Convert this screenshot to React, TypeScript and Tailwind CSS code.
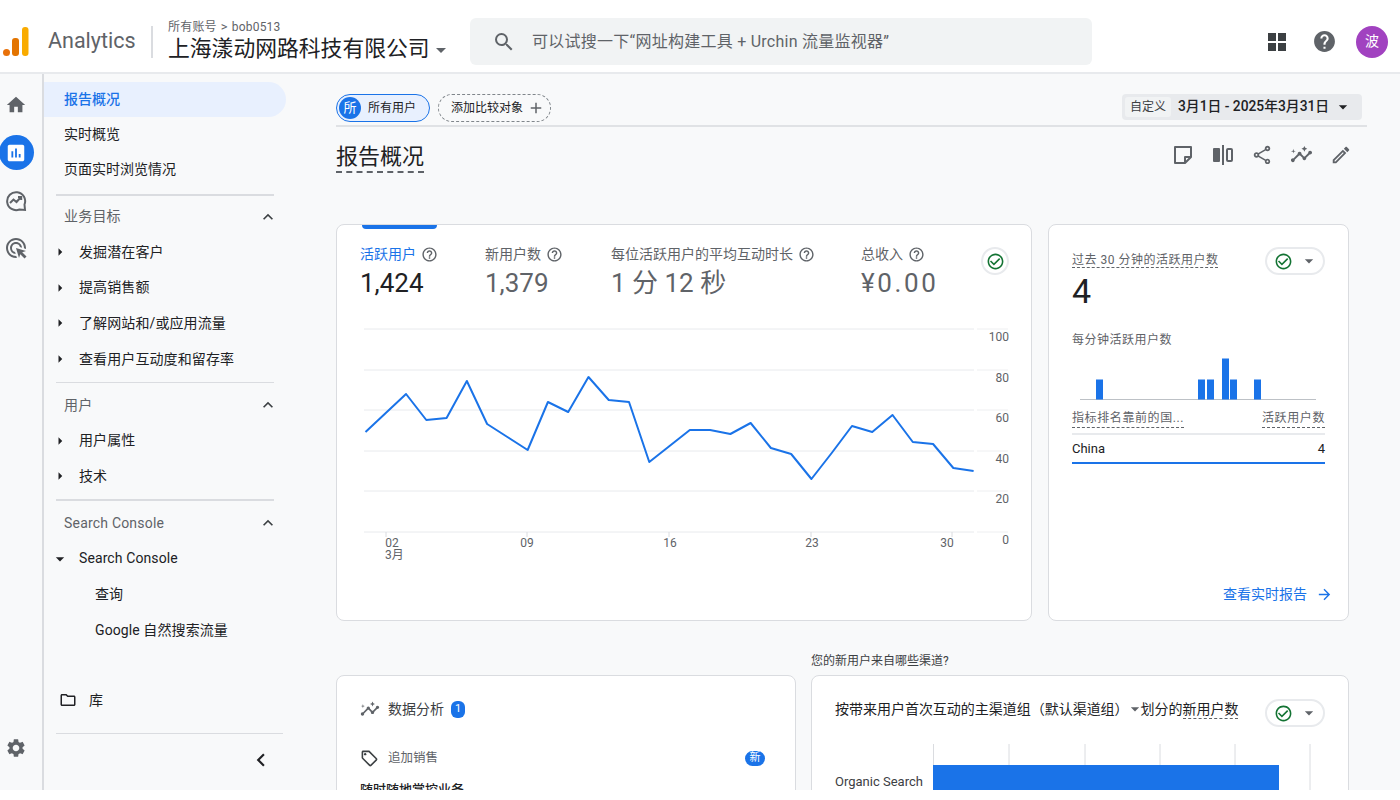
import type { ReactNode } from 'react';
import {
  MdAdd, MdAdsClick, MdArrowDropDown, MdArrowForward, MdArrowRight, MdAssessment, MdCheckCircleOutline,
  MdChevronLeft, MdHelp, MdHelpOutline, MdHome, MdInsights, MdKeyboardArrowUp, MdOutlineEdit,
  MdOutlineFolder, MdOutlineLocalOffer, MdOutlineShare, MdSearch, MdSettings,
} from 'react-icons/md';

const LINE_Y = [432, 413, 394, 420, 418, 381, 424, 437, 450, 402, 412, 377, 400, 402, 462, 446, 430, 430, 434, 423, 448, 454, 479, 453, 426, 432, 415, 442, 444, 468, 471];
const GRID_Y = [329, 370, 410, 451, 491, 532];
const AXIS_LABELS = ['100', '80', '60', '40', '20', '0'];
const X_LABELS = [['02', 392], ['09', 527], ['16', 670], ['23', 812], ['30', 947]] as const;
const MINUTE_BARS = [[1096, 20], [1198, 20], [1207, 20], [1222, 41], [1230, 20], [1254, 20]];

function Logo() {
  return (
    <svg width="26" height="30" viewBox="0 0 26 30" className="shrink-0">
      <circle cx="3.5" cy="25.5" r="3.5" fill="#e8710a" />
      <rect x="9" y="11" width="7" height="18" rx="3" fill="#e37400" />
      <rect x="19" y="0" width="6.5" height="29" rx="3" fill="#f9ab00" />
    </svg>
  );
}

function ExploreIcon() {
  return (
    <svg width="22" height="22" viewBox="0 0 22 22" fill="none" stroke="#5f6368" strokeWidth="2">
      <path d="M19.5 14.5A9 9 0 1 0 14.5 19.5l5.5.5z" />
      <path d="M5 13l3.5-3.5 3 2.5 4.5-5M13 7h3.2v3" />
    </svg>
  );
}

function NoteIcon() {
  return (
    <svg width="20" height="20" viewBox="0 0 20 20" fill="none" stroke="#5f6368" strokeWidth="2" strokeLinejoin="round">
      <path d="M2 2h16v10l-6 6H2z" />
      <path d="M18 12h-6v6" />
    </svg>
  );
}

function CompareIcon() {
  return (
    <svg width="22" height="20" viewBox="0 0 22 20">
      <rect x="1" y="3" width="7" height="14" rx="1" fill="#5f6368" />
      <rect x="10" y="0" width="2" height="20" fill="#5f6368" />
      <rect x="15" y="4" width="5" height="12" rx="1" fill="none" stroke="#5f6368" strokeWidth="2" />
    </svg>
  );
}

function NavItem({ children, active }: { children: ReactNode; active?: boolean }) {
  return (
    <div className={`flex h-[35px] w-[242px] items-center rounded-r-full pl-5 text-[14px] ${active ? 'bg-[#e8f0fe] font-medium text-[#1a73e8]' : 'text-[#202124]'}`}>
      {children}
    </div>
  );
}

function NavGroup({ label }: { label: string }) {
  return (
    <div className="flex h-[35.5px] w-[242px] items-center justify-between pl-5 pr-2 text-[14px] tracking-[0.2px] text-[#5f6368]">
      {label}
      <MdKeyboardArrowUp className="text-[20px] text-[#3c4043]" />
    </div>
  );
}

function NavChild({ label, open }: { label: string; open?: boolean }) {
  return (
    <div className="flex h-[35.6px] items-center pl-[6px] text-[14px] tracking-[0.1px] text-[#202124]">
      {open ? <MdArrowDropDown className="w-[20px] text-[20px]" /> : <MdArrowRight className="w-[20px] text-[18px]" />}
      <span className="ml-[9px]">{label}</span>
    </div>
  );
}

function Sidebar() {
  return (
    <aside className="flex w-[297px] shrink-0">
      <div className="w-[44px] shrink-0 border-r-2 border-[#dadce0]">
        <div className="flex h-full w-[32px] flex-col items-center pb-[31px] pt-[20px]">
          <MdHome className="shrink-0 text-[22px] text-[#5f6368]" />
          <div className="mt-[19px] flex h-[35px] w-[35px] shrink-0 items-center justify-center rounded-full bg-[#1a73e8]">
            <MdAssessment className="text-[22px] text-white" />
          </div>
          <div className="mt-[20px] shrink-0"><ExploreIcon /></div>
          <MdAdsClick className="mt-[24px] shrink-0 text-[24px] text-[#5f6368]" />
          <MdSettings className="mt-auto shrink-0 text-[22px] text-[#5f6368]" />
        </div>
      </div>
      <nav className="flex flex-1 flex-col pt-[8px]">
        <NavItem active>报告概况</NavItem>
        <NavItem>实时概览</NavItem>
        <NavItem>页面实时浏览情况</NavItem>
        <div className="ml-3 mb-[3.5px] mt-[7px] h-[1.5px] w-[218px] bg-[#dadce0]" />
        <NavGroup label="业务目标" />
        <NavChild label="发掘潜在客户" />
        <NavChild label="提高销售额" />
        <NavChild label="了解网站和/或应用流量" />
        <NavChild label="查看用户互动度和留存率" />
        <div className="ml-3 mb-[4px] mt-[5px] h-[1.5px] w-[218px] bg-[#dadce0]" />
        <NavGroup label="用户" />
        <NavChild label="用户属性" />
        <NavChild label="技术" />
        <div className="ml-3 my-[5px] h-[1.5px] w-[218px] bg-[#dadce0]" />
        <NavGroup label="Search Console" />
        <NavChild open label="Search Console" />
        <div className="flex h-[35.6px] items-center pl-[51px] text-[14px] text-[#202124]">查询</div>
        <div className="flex h-[35.6px] items-center pl-[51px] text-[14px] tracking-[0.1px] text-[#202124]">Google 自然搜索流量</div>
        <div className="mt-[35px] flex h-[35px] items-center pl-[15px] text-[14px] text-[#202124]">
          <MdOutlineFolder className="text-[18px]" />
          <span className="ml-[12px]">库</span>
        </div>
        <div className="ml-3 mt-[15px] h-[1.5px] w-[227px] bg-[#dadce0]" />
        <div className="flex h-[52px] items-center pl-[204px]">
          <MdChevronLeft className="text-[26px] text-[#202124]" />
        </div>
      </nav>
    </aside>
  );
}

function Metric({ label, value, width, active, wide }: { label: string; value: string; width: string; active?: boolean; wide?: boolean }) {
  return (
    <div className={`${width} shrink-0`}>
      <div className={`flex h-[20px] items-center gap-[5px] text-[14px] ${active ? 'text-[#1a73e8]' : 'text-[#5f6368]'}`}>
        {label}
        <MdHelpOutline className="text-[17px] text-[#5f6368]" />
      </div>
      <div className={`mt-[2px] h-[34px] text-[26px] leading-[34px] ${wide ? 'tracking-[2.6px]' : ''} ${active ? 'text-[#202124]' : 'text-[#5f6368]'}`}>{value}</div>
    </div>
  );
}

function StatusChip() {
  return (
    <div className="flex h-[28px] w-[60px] shrink-0 items-center rounded-full border-2 border-[#e8eaed] bg-white pl-[7px]">
      <MdCheckCircleOutline className="text-[19px] text-[#137333]" />
      <MdArrowDropDown className="ml-[6px] text-[20px] text-[#5f6368]" />
    </div>
  );
}

// svg coordinates are page pixels, the viewBox shifts them onto the card
function TrendChart() {
  const points = LINE_Y.map((y, i) => `${365.5 + i * 20.27},${y}`).join(' ');
  return (
    <svg width="694" height="250" viewBox="337 320 694 250" className="block" fontFamily="Roboto, 'Noto Sans CJK SC', sans-serif">
      {GRID_Y.map((y) => (
        <line key={y} x1="364" x2="974" y1={y} y2={y} stroke="#e8eaed" strokeWidth="1" />
      ))}
      {GRID_Y.map((y) => (
        <line key={y} x1="977" x2="1008" y1={y} y2={y} stroke="#eeeff1" strokeWidth="1" />
      ))}
      {AXIS_LABELS.map((label, i) => (
        <text key={label} x="1009" y={GRID_Y[i] + 12} textAnchor="end" fontSize="12" fill="#5f6368">{label}</text>
      ))}
      {[386, 527, 669, 811, 952].map((x) => (
        <line key={x} x1={x} x2={x} y1="532" y2="537" stroke="#dadce0" />
      ))}
      {X_LABELS.map(([label, x]) => (
        <text key={label} x={x} y="547" textAnchor="middle" fontSize="12" fill="#5f6368">{label}</text>
      ))}
      <text x="385" y="559" fontSize="12" fill="#5f6368">3月</text>
      <polyline points={points} fill="none" stroke="#1a73e8" strokeWidth="2" strokeLinejoin="round" />
    </svg>
  );
}

function MinuteBars() {
  return (
    <svg width="254" height="44" viewBox="1072 356 254 44" className="mt-[8px] block">
      <line x1="1080" x2="1316" y1="398.5" y2="398.5" stroke="#bdc1c6" />
      {MINUTE_BARS.map(([x, h]) => (
        <rect key={x} x={x} y={398.5 - h} width="7" height={h} fill="#1a73e8" />
      ))}
    </svg>
  );
}

function ChannelChart() {
  return (
    <svg width="485" height="50" viewBox="830 742 485 50" className="-ml-[5px] mt-[15px] block" fontFamily="Roboto, 'Noto Sans CJK SC', sans-serif">
      {[933.5, 1009, 1085, 1160, 1235, 1310].map((x) => (
        <line key={x} x1={x} x2={x} y1="744" y2="792" stroke="#dadce0" strokeWidth="1" />
      ))}
      <rect x="933" y="765" width="346" height="30" fill="#1a73e8" />
      <text x="835" y="786" fontSize="13" fill="#3c4043">Organic Search</text>
    </svg>
  );
}

export default function App() {
  return (
    <div className="h-[800px] w-[1400px] overflow-hidden bg-white font-['Roboto','Noto_Sans_CJK_SC',sans-serif]">
      <div className="flex h-[790px] flex-col overflow-hidden bg-[#f8f9fa]">
        <header className="flex h-[74px] shrink-0 items-center border-b-2 border-[#e8eaed] bg-white pt-[11px]">
          <div className="ml-[3px]"><Logo /></div>
          <div className="ml-[19px] w-[86px] text-[21.5px] text-[#5f6368]">Analytics</div>
          <div className="ml-[17px] h-[32px] w-[1.5px] bg-[#dadce0]" />
          <div className="ml-[15.5px] w-[302px] shrink-0">
            <div className="flex h-[16px] items-center gap-[4px] text-[12px] tracking-[0.2px] text-[#5f6368]">
              所有账号 <span className="text-[13px]">&gt;</span> bob0513
            </div>
            <div className="flex h-[29px] items-center text-[21.8px] text-[#202124]">
              上海漾动网路科技有限公司
              <MdArrowDropDown className="-ml-[1px] text-[24px] text-[#5f6368]" />
            </div>
          </div>
          <div className="flex h-[47px] w-[622px] items-center rounded-[6px] bg-[#f1f3f4] pl-[22px]">
            <MdSearch className="text-[24px] text-[#5f6368]" />
            <span className="ml-[16px] text-[16px] tracking-[0.25px] text-[#5f6368]">可以试搜一下“网址构建工具 + Urchin 流量监视器”</span>
          </div>
          <svg width="18" height="18" viewBox="0 0 18 18" className="ml-[176px]" fill="#3c4043">
            <rect width="8" height="8" /><rect x="10" width="8" height="8" />
            <rect y="10" width="8" height="8" /><rect x="10" y="10" width="8" height="8" />
          </svg>
          <MdHelp className="ml-[26px] text-[25px] text-[#5f6368]" />
          <div className="ml-[19px] flex h-[32px] w-[32px] items-center justify-center rounded-full bg-[#a142c0] text-[14px] text-white">波</div>
        </header>

        <div className="flex min-h-0 flex-1">
          <Sidebar />
          <main className="min-w-0 flex-1 pl-[39px] pr-[33px] pt-[20px]">
            <div className="flex h-[33px] items-start justify-between border-b-2 border-[#e0e2e5] pr-[5px]">
              <div className="flex items-center gap-[8px]">
                <div className="flex h-[28px] w-[94px] items-center rounded-full border-[1.5px] border-[#1a73e8] bg-[#e8f0fe] pl-[2px] text-[12px] text-[#202124]">
                  <span className="flex h-[22px] w-[22px] items-center justify-center rounded-full bg-[#1a73e8] text-[13px] text-white">所</span>
                  <span className="ml-[7px]">所有用户</span>
                </div>
                <div className="flex h-[28px] w-[113px] items-center rounded-full border border-dashed border-[#80868b] pl-[12px] text-[12px] text-[#202124]">
                  添加比较对象
                  <MdAdd className="ml-[4px] text-[18px] text-[#5f6368]" />
                </div>
              </div>
              <div className="flex h-[26px] w-[240px] items-center rounded-[4px] bg-[#e8eaed] pl-[3px] pr-[9px]">
                <span className="rounded-[3px] bg-[#f1f3f4] px-[5px] text-[12px] leading-[20px] text-[#3c4043]">自定义</span>
                <span className="ml-[7px] -mt-[1px] flex-1 text-[13.8px] font-medium text-[#202124]">3月1日 - 2025年3月31日</span>
                <MdArrowDropDown className="text-[20px] text-[#202124]" />
              </div>
            </div>

            <div className="flex h-[97px] items-start justify-between pr-[14px]">
              <h1 className="mt-[16px] border-b-2 border-dashed border-[#5f6368] pb-[1px] text-[22px] font-normal leading-[27px] text-[#202124]">报告概况</h1>
              <div className="mt-[16px] flex items-center gap-[15.5px] text-[#5f6368]">
                <div className="flex w-[24px] justify-center"><NoteIcon /></div>
                <div className="flex w-[24px] justify-center"><CompareIcon /></div>
                <div className="flex w-[24px] justify-center"><MdOutlineShare className="text-[22px]" /></div>
                <div className="flex w-[24px] justify-center"><MdInsights className="text-[23px]" /></div>
                <div className="flex w-[24px] justify-center"><MdOutlineEdit className="text-[22px]" /></div>
              </div>
            </div>

            <div className="flex gap-[16px]">
              <section className="relative h-[397px] w-[696px] shrink-0 overflow-hidden rounded-[8px] border border-[#dadce0] bg-white">
                <div className="absolute left-[25px] top-0 h-[4px] w-[75px] rounded-b-[4px] bg-[#1a73e8]" />
                <div className="flex pl-[23px] pt-[19px]">
                  <Metric active label="活跃用户" value="1,424" width="w-[125px]" />
                  <Metric label="新用户数" value="1,379" width="w-[126px]" />
                  <Metric label="每位活跃用户的平均互动时长" value="1 分 12 秒" width="w-[250px]" />
                  <Metric wide label="总收入" value="¥0.00" width="w-[120px]" />
                  <div className="mt-[3px] flex h-[28px] w-[28px] items-center justify-center rounded-full border-2 border-[#e8eaed]">
                    <MdCheckCircleOutline className="text-[19px] text-[#137333]" />
                  </div>
                </div>
                <div className="mt-[20px]"><TrendChart /></div>
              </section>

              <section className="flex h-[397px] w-[301px] shrink-0 flex-col rounded-[8px] border border-[#dadce0] bg-white px-[23px] pt-[22px]">
                <div className="flex items-start justify-between">
                  <div>
                    <span className="border-b border-dashed border-[#5f6368] text-[12px] leading-[18px] tracking-[0.5px] text-[#5f6368]">过去 30 分钟的活跃用户数</span>
                    <div className="text-[34px] leading-[40px] text-[#202124]">4</div>
                  </div>
                  <StatusChip />
                </div>
                <div className="mt-[20px] text-[12px] leading-[18px] tracking-[0.5px] text-[#5f6368]">每分钟活跃用户数</div>
                <MinuteBars />
                <div className="mt-[9px] flex h-[25px] items-start justify-between border-b-2 border-[#e8eaed] text-[12px] tracking-[0.6px] text-[#5f6368]">
                  <span className="border-b border-dashed border-[#5f6368] leading-[17px]">指标排名靠前的国...</span>
                  <span className="border-b border-dashed border-[#5f6368] leading-[17px]">活跃用户数</span>
                </div>
                <div className="flex h-[29px] items-center justify-between border-b-2 border-[#1a73e8] text-[13px] text-[#202124]">
                  <span>China</span><span>4</span>
                </div>
                <div className="-mr-[8px] mt-auto flex h-[36px] items-start justify-end gap-[9px] text-[14px] text-[#1a73e8]">
                  <span className="leading-[20px]">查看实时报告</span>
                  <MdArrowForward className="mt-[2px] text-[17px]" />
                </div>
              </section>
            </div>

            <div className="mt-[31px] flex gap-[15px]">
              <section className="mt-[23px] h-[140px] w-[460px] shrink-0 rounded-[8px] border border-[#dadce0] bg-white px-[23px] pt-[23px]">
                <div className="flex h-[20px] items-center text-[14px] text-[#3c4043]">
                  <MdInsights className="text-[20px] text-[#5f6368]" />
                  <span className="ml-[8px]">数据分析</span>
                  <span className="ml-[7px] flex h-[17px] w-[14px] items-center justify-center rounded-[6px] bg-[#1a73e8] text-[11px] text-white">1</span>
                </div>
                <div className="mt-[28px] flex h-[22px] items-center text-[12.5px] text-[#5f6368]">
                  <MdOutlineLocalOffer className="text-[19px] text-[#3c4043]" />
                  <span className="ml-[9px] flex-1">追加销售</span>
                  <span className="mr-[7px] flex h-[15px] w-[20px] items-center justify-center rounded-full bg-[#1a73e8] text-[11px] text-white">新</span>
                </div>
                <div className="mt-[11px] text-[13px] font-medium text-[#202124]">随时随地掌控业务</div>
              </section>

              <div className="w-[538px] shrink-0">
                <div className="h-[23px] text-[12px] leading-[18px] text-[#3c4043]">您的新用户来自哪些渠道?</div>
                <section className="h-[140px] overflow-hidden rounded-[8px] border border-[#dadce0] bg-white pl-[23px] pt-[23px]">
                  <div className="flex h-[28px] items-start">
                    <div className="flex h-[20px] w-[430px] items-center text-[14px] tracking-[-0.02px] text-[#202124]">
                      按带来用户首次互动的主渠道组（默认渠道组）
                      <MdArrowDropDown className="-mx-[4px] text-[20px] text-[#5f6368]" />
                      划分的
                      <span className="border-b border-dashed border-[#5f6368] leading-[18px]">新用户数</span>
                    </div>
                    <StatusChip />
                  </div>
                  <ChannelChart />
                </section>
              </div>
            </div>
          </main>
        </div>
      </div>
    </div>
  );
}
